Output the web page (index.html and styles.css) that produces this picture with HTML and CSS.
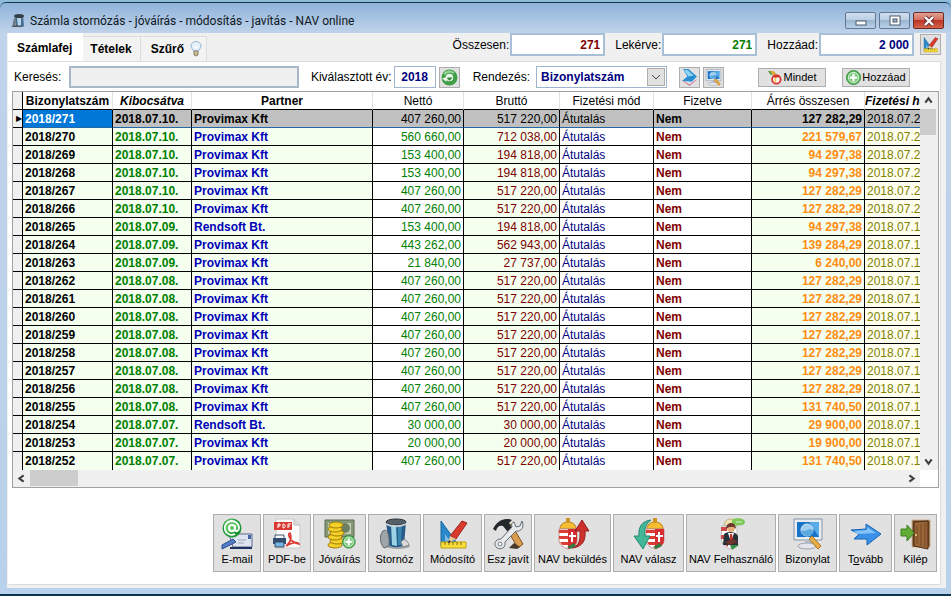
FILE: index.html
```
<!DOCTYPE html>
<html lang="hu">
<head>
	<meta charset="utf-8">
	<title>Számla stornózás - jóváírás - módosítás - javítás - NAV online</title>
	<link rel="stylesheet" href="styles.css">
</head>
<body>
<div class="window">
	<header class="titlebar">
		<svg class="app-icon" viewBox="0 0 16 16"><path d="M5 3h8l1 10-8 1z" fill="#466f92"/><path d="M7 5l1 8 3-1V5z" fill="#b5d5e8"/><ellipse cx="9" cy="3" rx="5" ry="2" fill="#384047"/><path d="M2 14L4 5l2 1-1 8z" fill="#6b7985"/><path d="M1 14l5-2 9 2z" fill="#4c565e"/></svg>
		<h1>Számla stornózás - jóváírás - módosítás - javítás - NAV online</h1>
		<div class="controls">
			<button class="ctl" aria-label="Kis méret"><svg viewBox="0 0 12 12"><rect x="1" y="6" width="10" height="4" fill="#fff" stroke="#4d5a69"/></svg></button>
			<button class="ctl" aria-label="Teljes méret"><svg viewBox="0 0 12 12"><rect x="1" y="1" width="10" height="9" fill="#fff" stroke="#4d5a69"/><rect x="4" y="4" width="4" height="3" fill="#9db6d2" stroke="#4d5a69"/></svg></button>
			<button class="ctl close" aria-label="Bezárás"><svg viewBox="0 0 12 12"><path d="M2 2l8 8M10 2l-8 8" stroke="#5a3030" stroke-width="4"/><path d="M2 2l8 8M10 2l-8 8" stroke="#fff" stroke-width="2.4"/></svg></button>
		</div>
	</header>

	<main class="client">
		<div class="topbar">
			<nav class="tabs">
				<button class="tab active">Számlafej</button>
				<button class="tab">Tételek</button>
				<button class="tab">Szűrő <svg class="bulb" viewBox="0 0 12 16"><path d="M3.500 10C3 8 1 7.500 1 5a5 4.500 0 0 1 10 0c0 2.500-2 3-2.500 5z" fill="#e4f1fb" stroke="#92b4cf"/><path d="M4 5l2 2 2-2" fill="none" stroke="#fff"/><path d="M4 10h4v4l-2 1-2-1z" fill="#c9b98c" stroke="#89826e"/></svg></button>
			</nav>
			<div class="totals">
				<label for="total">Összesen:</label><input id="total" class="num red" value="271" readonly>
				<label for="fetched">Lekérve:</label><input id="fetched" class="num green" value="271" readonly>
				<label for="add">Hozzáad:</label><input id="add" class="num navy" value="2 000">
				<button class="icon-btn" aria-label="Módosító"><svg viewBox="0 0 32 32"><use href="#i-edit"/></svg></button>
			</div>
		</div>

		<section class="page">
			<div class="filters">
				<label for="search">Keresés:</label><input id="search" class="search">
				<label for="year">Kiválasztott év:</label><input id="year" class="year" value="2018">
				<button class="icon-btn" aria-label="Frissítés"><svg viewBox="0 0 16 16"><circle cx="8" cy="8" r="5.500" fill="#e9f5e6" stroke="#3f9f48" stroke-width="4"/><path d="M3 5a6 6 0 0 1 9-1" fill="none" stroke="#9ad79a" stroke-width="2"/><path d="M5 8h6L8 11z" fill="#2f8138"/><path d="M1 9l5-2-1 5z" fill="#e9f5e6"/></svg></button>
				<label for="order" class="order-label">Rendezés:</label>
				<div class="combo">
					<select id="order"><option>Bizonylatszám</option></select>
					<svg viewBox="0 0 18 18"><rect x=".5" y=".5" width="17" height="17" fill="#e1e1e1" stroke="#adadad"/><path d="M5 7l4 4 4-4" fill="none" stroke="#444"/></svg>
				</div>
				<button class="icon-btn scan" aria-label="Lapozás"><svg viewBox="0 0 16 16"><path d="M1 11l6-3 8 2-7 6z" fill="#d78fa6"/><path d="M1 10l6-3 8 2-7 5z" fill="#d8eef8"/><path d="M2 0h5l8 7-5 5-9-1 5-4z" fill="#2a8dd0"/><path d="M3 1h3l6 5-5 1z" fill="#8fd4f5"/></svg></button>
				<button class="icon-btn" aria-label="Bizonylat"><svg viewBox="0 0 32 32"><use href="#i-screen"/></svg></button>
				<button class="text-btn all"><svg viewBox="0 0 16 16"><path d="M1 1h6l3 3-3 2z" fill="#d9a93e"/><path d="M2 1l3 4" stroke="#5b9a50" stroke-width="2"/><circle cx="10" cy="10" r="4.500" fill="#fff" stroke="#d8322c" stroke-width="2"/><path d="M8 13V8l2-1v6" fill="#f0c457"/><path d="M7 7h6" stroke="#cc3027" stroke-width="2"/></svg>Mindet</button>
				<button class="text-btn"><svg viewBox="0 0 16 16"><use href="#i-plus"/></svg>Hozzáad</button>
			</div>

			<div class="grid">
				<div class="grid-body">
					<div class="table-clip">
					<table>
						<colgroup><col class="c-mark"><col class="c-id"><col class="c-date"><col class="c-partner"><col class="c-net"><col class="c-gross"><col class="c-mode"><col class="c-paid"><col class="c-margin"><col class="c-due"></colgroup>
						<thead>
							<tr><th></th><th>Bizonylatszám</th><th class="it">Kibocsátva</th><th>Partner</th><th class="n">Nettó</th><th class="n">Bruttó</th><th class="n">Fizetési mód</th><th class="n">Fizetve</th><th class="n">Árrés összesen</th><th class="it">Fizetési hat.</th></tr>
						</thead>
						<tbody>
							<tr class="current"><td>&#9654;</td><td>2018/271</td><td>2018.07.10.</td><td>Provimax Kft</td><td>407 260,00</td><td>517 220,00</td><td>Átutalás</td><td>Nem</td><td>127 282,29</td><td>2018.07.20.</td></tr>
							<tr><td></td><td>2018/270</td><td>2018.07.10.</td><td>Provimax Kft</td><td>560 660,00</td><td>712 038,00</td><td>Átutalás</td><td>Nem</td><td>221 579,67</td><td>2018.07.20.</td></tr>
							<tr><td></td><td>2018/269</td><td>2018.07.10.</td><td>Provimax Kft</td><td>153 400,00</td><td>194 818,00</td><td>Átutalás</td><td>Nem</td><td>94 297,38</td><td>2018.07.20.</td></tr>
							<tr><td></td><td>2018/268</td><td>2018.07.10.</td><td>Provimax Kft</td><td>153 400,00</td><td>194 818,00</td><td>Átutalás</td><td>Nem</td><td>94 297,38</td><td>2018.07.20.</td></tr>
							<tr><td></td><td>2018/267</td><td>2018.07.10.</td><td>Provimax Kft</td><td>407 260,00</td><td>517 220,00</td><td>Átutalás</td><td>Nem</td><td>127 282,29</td><td>2018.07.20.</td></tr>
							<tr><td></td><td>2018/266</td><td>2018.07.10.</td><td>Provimax Kft</td><td>407 260,00</td><td>517 220,00</td><td>Átutalás</td><td>Nem</td><td>127 282,29</td><td>2018.07.20.</td></tr>
							<tr><td></td><td>2018/265</td><td>2018.07.09.</td><td>Rendsoft Bt.</td><td>153 400,00</td><td>194 818,00</td><td>Átutalás</td><td>Nem</td><td>94 297,38</td><td>2018.07.17.</td></tr>
							<tr><td></td><td>2018/264</td><td>2018.07.09.</td><td>Provimax Kft</td><td>443 262,00</td><td>562 943,00</td><td>Átutalás</td><td>Nem</td><td>139 284,29</td><td>2018.07.17.</td></tr>
							<tr><td></td><td>2018/263</td><td>2018.07.09.</td><td>Provimax Kft</td><td>21 840,00</td><td>27 737,00</td><td>Átutalás</td><td>Nem</td><td>6 240,00</td><td>2018.07.17.</td></tr>
							<tr><td></td><td>2018/262</td><td>2018.07.08.</td><td>Provimax Kft</td><td>407 260,00</td><td>517 220,00</td><td>Átutalás</td><td>Nem</td><td>127 282,29</td><td>2018.07.16.</td></tr>
							<tr><td></td><td>2018/261</td><td>2018.07.08.</td><td>Provimax Kft</td><td>407 260,00</td><td>517 220,00</td><td>Átutalás</td><td>Nem</td><td>127 282,29</td><td>2018.07.16.</td></tr>
							<tr><td></td><td>2018/260</td><td>2018.07.08.</td><td>Provimax Kft</td><td>407 260,00</td><td>517 220,00</td><td>Átutalás</td><td>Nem</td><td>127 282,29</td><td>2018.07.16.</td></tr>
							<tr><td></td><td>2018/259</td><td>2018.07.08.</td><td>Provimax Kft</td><td>407 260,00</td><td>517 220,00</td><td>Átutalás</td><td>Nem</td><td>127 282,29</td><td>2018.07.16.</td></tr>
							<tr><td></td><td>2018/258</td><td>2018.07.08.</td><td>Provimax Kft</td><td>407 260,00</td><td>517 220,00</td><td>Átutalás</td><td>Nem</td><td>127 282,29</td><td>2018.07.16.</td></tr>
							<tr><td></td><td>2018/257</td><td>2018.07.08.</td><td>Provimax Kft</td><td>407 260,00</td><td>517 220,00</td><td>Átutalás</td><td>Nem</td><td>127 282,29</td><td>2018.07.16.</td></tr>
							<tr><td></td><td>2018/256</td><td>2018.07.08.</td><td>Provimax Kft</td><td>407 260,00</td><td>517 220,00</td><td>Átutalás</td><td>Nem</td><td>127 282,29</td><td>2018.07.16.</td></tr>
							<tr><td></td><td>2018/255</td><td>2018.07.08.</td><td>Provimax Kft</td><td>407 260,00</td><td>517 220,00</td><td>Átutalás</td><td>Nem</td><td>131 740,50</td><td>2018.07.16.</td></tr>
							<tr><td></td><td>2018/254</td><td>2018.07.07.</td><td>Rendsoft Bt.</td><td>30 000,00</td><td>30 000,00</td><td>Átutalás</td><td>Nem</td><td>29 900,00</td><td>2018.07.15.</td></tr>
							<tr><td></td><td>2018/253</td><td>2018.07.07.</td><td>Provimax Kft</td><td>20 000,00</td><td>20 000,00</td><td>Átutalás</td><td>Nem</td><td>19 900,00</td><td>2018.07.15.</td></tr>
							<tr><td></td><td>2018/252</td><td>2018.07.07.</td><td>Provimax Kft</td><td>407 260,00</td><td>517 220,00</td><td>Átutalás</td><td>Nem</td><td>131 740,50</td><td>2018.07.15.</td></tr>
						</tbody>
					</table>
					</div>
					<div class="vscroll">
						<svg viewBox="0 0 16 16"><path d="M5 10l3-4 3 4" /></svg>
						<div class="thumb"></div>
						<svg viewBox="0 0 16 16"><path d="M5 6l3 4 3-4" /></svg>
					</div>
				</div>
				<div class="hscroll">
					<svg viewBox="0 0 16 16"><path d="M10 5L6 8l4 3" /></svg>
					<div class="thumb"></div>
					<svg viewBox="0 0 16 16"><path d="M6 5l4 3-4 3" /></svg>
				</div>
			</div>

			<div class="actions">
				<button class="small"><svg viewBox="0 0 32 32">
					<path d="M8 16h23v13H12z" fill="#dde4ef" stroke="#56688d"/><path d="M9 30h22" stroke="#1f315c" stroke-width="2"/><path d="M27 17h3v4h-3z" fill="#4563a0"/><path d="M17 22h8M17 25h6" stroke="#9aa5ba"/>
					<path d="M1 27l11-6 3 3-10 5-4 2z" fill="#547fc5" stroke="#294d91"/>
					<circle cx="11" cy="10" r="9.500" fill="#1e9637"/><circle cx="10" cy="8" r="7" fill="#59c562"/><circle cx="11" cy="10" r="3" fill="none" stroke="#fff" stroke-width="2"/><path d="M14 7v5c1 2 4 1 4-2 0-5-4-7-8-7-5 1-7 5-6 9 1 4 6 6 10 4" fill="none" stroke="#fff" stroke-width="1.800"/>
				</svg>E-mail</button>
				<button class="small"><svg viewBox="0 0 32 32">
					<path d="M5 1h18l6 6v23H5z" fill="#fbfbfb" stroke="#c8c8c8"/><path d="M23 1v6h6" fill="#ddd" stroke="#bbb"/>
					<path d="M3 4h18v8H3z" fill="#d83a31"/><path d="M7 10V6h2v2H7M12 6v4c3 0 3-4 0-4M17 10V6h3M17 8h2" fill="none" stroke="#fff"/>
					<path d="M15 28c5-4 6-9 4-13-3 0-1 9 9 11-1-3-8-1-13 2z" fill="none" stroke="#dc3830" stroke-width="1.600"/>
					<path d="M4 17h9v4H4z" fill="#f4f7fb" stroke="#456"/><path d="M2 20h13v6H2z" fill="#304c70"/><path d="M4 24h9v5H4z" fill="#70b4e8" stroke="#3a4959"/>
				</svg>PDF-be</button>
				<button class="medium"><svg viewBox="0 0 32 32">
					<path d="M1 2h29v17H1z" fill="#879879" stroke="#5a6a50"/><path d="M4 5h23v11H4z" fill="#c2ccb1"/><circle cx="21" cy="10" r="5" fill="#6d8065"/>
					<g fill="#f3d127" stroke="#a17b0c"><ellipse cx="11" cy="27" rx="7" ry="3"/><ellipse cx="13" cy="23" rx="7" ry="3"/><ellipse cx="11" cy="19" rx="7" ry="3"/><ellipse cx="13" cy="15" rx="7" ry="3"/><ellipse cx="11" cy="11" rx="7" ry="3"/><ellipse cx="12" cy="7" rx="7" ry="3"/></g>
					<use href="#i-plus" transform="translate(18 17) scale(.85)"/>
				</svg>Jóváírás</button>
				<button class="medium"><svg viewBox="0 0 32 32">
					<ellipse cx="19" cy="28" rx="12" ry="3" fill="#9da2a5"/><path d="M7 4h20l-2 23c-4 3-12 3-15 0z" fill="#265a88"/><path d="M12 6h5l1 22-5-1z" fill="#9bd2e6"/><path d="M19 6h4l-1 21h-3z" fill="#3986af"/>
					<ellipse cx="17" cy="4" rx="10" ry="3" fill="#566068" stroke="#2c343a"/><path d="M7 6c5 3 15 3 20 0" fill="none" stroke="#c9d0d4" stroke-width="2"/>
					<path d="M4 13c4-3 7 3 6 15l-5 2c-4-4-5-13-1-17z" fill="#a0a5aa" stroke="#5e666d"/><path d="M22 24c3-5 7-1 8 3l-6 2z" fill="#d8dadd" stroke="#888"/>
				</svg>Stornóz</button>
				<button class="large"><svg viewBox="0 0 32 32"><g id="i-edit">
					<path d="M4 3l18 25H4z" fill="#2a88cb" stroke="#1768a1"/><path d="M8 16l5 7H8z" fill="#7fbbe6"/>
					<path d="M4 24h25v6H4z" fill="#f9df39" stroke="#c5a011"/><path d="M8 24v3M12 24v3M16 24v3M20 24v3M24 24v3" stroke="#83660b"/>
					<path d="M13 18L25 3l5 2-11 16z" fill="#d93a2d" stroke="#9c241c"/><path d="M13 18l6 3-8 4z" fill="#eac79a"/><path d="M12 22l-1 3 3-1z" fill="#222"/>
				</g></svg>Módosító</button>
				<button class="small"><svg viewBox="0 0 32 32">
					<path d="M14 10l5-4 12 20-5 4z" fill="#d99d51" stroke="#80521e"/><path d="M1 11C5 3 12-1 20 2l-3 3 3 5-5 3-4-5c-4-1-6 1-7 5z" fill="#24282b"/>
					<path d="M22 4l2 5 4-1 2-5c3 6-1 11-6 10L13 24c1 6-4 8-8 6-4-3-2-9 4-9L20 9c-1-3 0-5 2-5z" fill="#e6eaed" stroke="#646c72"/><circle cx="8" cy="26" r="2" fill="#fff" stroke="#727a80"/>
					<path d="M17 30l5-5 6 4-3 2z" fill="#49382a"/>
				</svg>Esz javít</button>
				<button class="send"><svg viewBox="0 0 32 32"><g id="i-arms">
					<path d="M3 11c0-4 3-7 8-7s8 3 8 7z" fill="#f4bd32" stroke="#b97a12"/><path d="M10 4V1h2v3" fill="none" stroke="#d19422" stroke-width="2"/>
					<path d="M2 11h18v11c0 5-4 7-9 9-5-2-9-4-9-9z" fill="#fff" stroke="#bf9793"/><path d="M2 12h9v3H2zM2 18h9v3H2zM3 24h8v3H5z" fill="#df3b35"/><path d="M11 11h9v11c0 5-4 7-9 9z" fill="#d52e30"/><path d="M15 14v10M12 18h7" stroke="#fff" stroke-width="2"/>
				</g><path d="M15 30c9-3 8-10 8-17h-5l7-11 7 11h-4c1 10-3 16-13 17z" fill="#ce302b" stroke="#951c1d"/><path d="M10 29l7-4 2 3-6 3z" fill="#357b42"/></svg>NAV beküldés</button>
				<button class="reply"><svg viewBox="0 0 32 32"><use href="#i-arms" transform="translate(11 0)"/><path d="M18 2C9 3 5 9 6 18H1l9 13 7-13h-5c-1-8 1-12 6-16z" fill="#43b697" stroke="#278a70"/><path d="M20 29l7-4 2 3-6 3z" fill="#357b42"/></svg>NAV válasz</button>
				<button class="user"><svg viewBox="0 0 32 32">
					<path d="M10 4c2-4 9-4 11 0v4H9z" fill="#eee2b0" stroke="#bdad76"/><path d="M7 8h15v13c0 6-5 8-8 10-4-2-8-6-8-12z" fill="#fff" stroke="#bbb"/><path d="M6 9h6v4H6zM6 17h6v4H6zM7 25h6v4z" fill="#cd4b46"/><path d="M15 27h9l-7 5z" fill="#379147"/>
					<path d="M17 2c3-3 13-2 13 2s-8 4-10 3l-3 2z" fill="#7cc757"/><path d="M21 4h6" stroke="#d9f1ca"/>
					<path d="M9 16c3-3 12-3 14 2v9H8z" fill="#26313a"/><path d="M13 15h6l-3 9z" fill="#fff"/><path d="M15 16h2l1 6-2 3-1-3z" fill="#c52f2c"/><circle cx="16" cy="10" r="4" fill="#e8ad7c"/><path d="M11 11c0-8 10-8 10 0-2-3-7-3-10 0z" fill="#69382a"/><path d="M10 24l8-3 5 3-8 3z" fill="#73332d"/>
				</svg>NAV Felhasználó</button>
				<button class="large"><svg viewBox="0 0 32 32"><g id="i-screen">
					<path d="M2 1h28v21H2z" fill="#e9edf2" stroke="#8593a4"/><path d="M5 4h22v15H5z" fill="#1973c8"/><path d="M17 4h10v15z" fill="#56abe8"/><circle cx="15" cy="12" r="6" fill="#9fcdee" stroke="#d3eafa"/><path d="M9 12c4 3 8-3 12 0 0 8-11 8-12 0z" fill="#5ba7df"/>
					<path d="M13 22h7v4h-7z" fill="#b7bec7"/><ellipse cx="15" cy="28" rx="9" ry="3" fill="#e2e6ec" stroke="#9ba4af"/><path d="M20 18l9 10-3 3-9-10z" fill="#e8ad49" stroke="#ad7421"/>
				</g></svg>Bizonylat</button>
				<button class="medium"><svg viewBox="0 0 32 32"><path d="M1 12l15-1V6l15 10-14 11v-6L4 21l5-5z" fill="#3b91e6" stroke="#1864b8"/><path d="M4 13l13-1V9l9 6-19 1z" fill="#85c3fa"/></svg><span>T<u>o</u>vább</span></button>
				<button class="exit"><svg viewBox="0 0 32 32"><path d="M12 2h18v27H12z" fill="#6d492b" stroke="#d1b48d"/><path d="M14 4l14-1v28l-14-3z" fill="#986538" stroke="#4d2d14"/><path d="M17 7v19M21 6v22M25 5v24" stroke="#784a24"/><circle cx="16" cy="17" r="1" fill="#f2d98e"/><path d="M1 11h6V7l7 8-7 8v-5H1z" fill="#62ae35" stroke="#3c7e20"/></svg>Kilép</button>
			</div>
		</section>
	</main>
</div>

<svg class="defs" viewBox="0 0 16 16">
	<defs><g id="i-plus"><circle cx="8" cy="8" r="7.500" fill="#58b65b" stroke="#3b8e43"/><circle cx="8" cy="8" r="5.500" fill="#79c979" stroke="#e5f6e3"/><path d="M8 4v8M4 8h8" stroke="#fff" stroke-width="2.400"/></g></defs>
</svg>
</body>
</html>
```

FILE: styles.css
```
* {
	box-sizing: border-box;
}
body {
	margin: 0;
	background: #8dbcdb;
	font-family: "Liberation Sans", Arial, sans-serif;
	font-size: 12px;
	line-height: 14px;
	color: #000;
}
button, input, select {
	font: inherit;
	color: inherit;
	margin: 0;
	padding: 0;
}
svg {
	display: block;
	flex: none;
}
.defs {
	position: absolute;
	width: 0;
	height: 0;
}

/* window frame */
.window {
	display: flex;
	flex-direction: column;
	min-height: calc(100vh - 2px);
	margin-top: 2px;
	border-top: 1px solid #17384f;
	border-bottom: 2px solid #0c3548;
	border-radius: 6px 6px 0 0;
	padding: 0 5px 6px 7px;
	background: linear-gradient(#8fb3da, #bfd3ea 30px, #b9d1ea);
}
.titlebar {
	display: flex;
	align-items: center;
	gap: 4px;
	height: 30px;
	padding: 5px 2px 0 3px;
}
.app-icon {
	width: 16px;
	height: 16px;
}
h1 {
	margin: 0;
	font: 12px Roboto, "Noto Sans", sans-serif;
	color: #101820;
}
.controls {
	display: flex;
	gap: 3px;
	margin-left: auto;
}
.ctl {
	display: flex;
	align-items: center;
	justify-content: center;
	width: 31px;
	height: 17px;
	border: 1px solid #63788f;
	border-radius: 2px;
	background: linear-gradient(#d0dfef, #b9cde3 50%, #9bb5d2 50%, #b9d1ea);
}
.ctl svg {
	width: 12px;
	height: 12px;
}
.close {
	border-color: #702b23;
	background: linear-gradient(#e2a294, #d0695a 50%, #bb3626 50%, #d5644c);
}

.client {
	display: flex;
	flex-direction: column;
	flex: 1;
	padding: 0 5px 3px 1px;
	background: #f0f0f0;
}

/* tabs and totals */
.topbar {
	display: flex;
	justify-content: space-between;
	height: 28px;
}
.tabs {
	display: flex;
	align-items: flex-end;
}
.tab {
	display: flex;
	align-items: center;
	gap: 6px;
	height: 25px;
	padding: 0 8px 0 7px;
	border: 1px solid #dcdcdc;
	border-left: 0;
	border-bottom: 0;
	background: #f3f3f3;
	font-weight: bold;
}
.tab.active {
	height: 28px;
	padding: 0 10px 0 9px;
	background: #fff;
	border-color: #fff;
}
.tab:last-child {
	padding: 0 4px 0 10px;
}
.bulb {
	width: 12px;
	height: 16px;
}
.totals {
	display: flex;
	align-items: flex-start;
}
.totals label {
	padding-top: 5px;
	margin: 0 1px 0 10px;
}
.num {
	width: 95px;
	height: 23px;
	padding: 0 3px;
	border: 2px solid #a9bfd5;
	background: #fff;
	font-weight: bold;
	text-align: right;
}
.red { color: #800000; }
.green { color: #008000; }
.navy { color: #000080; }

.icon-btn {
	display: flex;
	align-items: center;
	justify-content: center;
	width: 21px;
	height: 21px;
	border: 1px solid #adadad;
	background: #e1e1e1;
}
.icon-btn svg {
	width: 17px;
	height: 17px;
}
.totals .icon-btn {
	margin: 1px 0 0 6px;
}

.page {
	display: flex;
	flex-direction: column;
	flex: 1;
	padding: 4px 1px 12px 3px;
	border: 1px solid #dcdcdc;
	border-left-color: #fff;
	background: #fff;
}

/* filter row */
.filters {
	display: flex;
	align-items: center;
	height: 25px;
	padding: 0 29px 3px 2px;
}
.search {
	flex: 1;
	height: 22px;
	margin: 0 12px 0 8px;
	border: 2px solid #a9b8c8;
	background: #f0f0f0;
}
.year {
	width: 42px;
	height: 22px;
	margin: 0 3px 0 2px;
	border: 1px solid #9fb4cd;
	background: #fff;
	color: #000080;
	font-weight: bold;
	text-align: center;
}
.order-label {
	margin: 0 6px 0 13px;
}
.combo {
	position: relative;
	width: 131px;
	height: 22px;
}
.combo select {
	appearance: none;
	width: 100%;
	height: 100%;
	padding: 0 22px 0 4px;
	border: 1px solid #9fb4cd;
	border-radius: 0;
	background: #fff;
	color: #000080;
	font-weight: bold;
}
.combo svg {
	position: absolute;
	top: 2px;
	right: 2px;
	width: 18px;
	height: 18px;
	pointer-events: none;
}
.scan {
	margin: 0 3px 0 12px;
}
.text-btn {
	display: flex;
	align-items: center;
	justify-content: center;
	gap: 1px;
	width: 68px;
	height: 19px;
	border: 1px solid #adadad;
	background: #e1e1e1;
	font-size: 11px;
}
.text-btn svg {
	width: 15px;
	height: 15px;
}
.all {
	margin: 0 16px 0 34px;
}

/* data grid */
.grid {
	border: 1px solid #a0a0a0;
}
.grid-body {
	display: flex;
}
.table-clip {
	flex: 1;
	min-width: 0;
	overflow: hidden;
}
table {
	table-layout: fixed;
	width: 936px;
	border-collapse: separate;
	border-spacing: 0;
}
.c-mark { width: 10px; }
.c-id { width: 90px; }
.c-date { width: 79px; }
.c-partner { width: 181px; }
.c-net { width: 91px; }
.c-gross { width: 96px; }
.c-mode { width: 94px; }
.c-paid { width: 98px; }
.c-margin { width: 113px; }
.c-due { width: 84px; }
th, td {
	height: 18px;
	padding: 0 2px;
	border-right: 1px solid #000;
	border-bottom: 1px solid #000;
	overflow: hidden;
	white-space: nowrap;
	line-height: 14px;
	text-align: left;
}
th {
	border-right-color: #e2e2e2;
	text-align: center;
}
th:first-child {
	border-right-color: #000;
	background: #f0f0f0;
}
.it { font-style: italic; }
.n { font-weight: normal; }
th:last-child { text-align: left; padding: 0; }
tbody tr:last-child td {
	border-bottom: 0;
}
td:nth-child(1) { background: #f0f0f0; padding: 0; font-size: 8px; text-align: right; }
td:nth-child(2) { background: #f4fff0; font-weight: bold; }
td:nth-child(3) { background: #f4fff0; color: #008000; font-weight: bold; }
td:nth-child(4) { background: #f4fff0; color: #0000b8; font-weight: bold; }
td:nth-child(5) { color: #008000; text-align: right; }
td:nth-child(6) { background: #f4fff0; color: #800000; text-align: right; }
td:nth-child(7) { color: #000080; }
td:nth-child(8) { color: #800000; font-weight: bold; }
td:nth-child(9) { background: #f4fff0; color: #ff8c10; font-weight: bold; text-align: right; }
td:nth-child(10) { background: #fffff0; color: #808000; }
tr.current td:nth-child(n+2) {
	border-bottom-color: #2468a8;
	background: #c0c0c0;
	color: #000;
}
tr.current td:nth-child(2) {
	background: #0078d7;
	color: #fff;
}

.vscroll, .hscroll {
	display: flex;
	background: #f0f0f0;
}
.vscroll {
	flex-direction: column;
	width: 18px;
}
.hscroll {
	height: 17px;
	margin-right: 18px;
}
.vscroll svg, .hscroll svg {
	width: 17px;
	height: 17px;
	fill: none;
	stroke: #404040;
	stroke-width: 2;
}
.vscroll svg:last-child { margin-top: auto; }
.hscroll svg:last-child { margin-left: auto; }
.thumb { background: #cdcdcd; }
.vscroll .thumb { height: 26px; margin-right: 2px; }
.hscroll .thumb { width: 48px; margin-bottom: 1px; }

/* bottom buttons */
.actions {
	display: flex;
	justify-content: flex-end;
	gap: 2px;
	margin-top: auto;
	padding: 20px 2px 0 0;
}
.actions button {
	display: flex;
	flex-direction: column;
	align-items: center;
	justify-content: space-between;
	height: 58px;
	padding: 3px 0 5px;
	border: 1px solid #adadad;
	background: #e1e1e1;
	font-size: 11px;
	line-height: 13px;
	white-space: nowrap;
}
.actions svg {
	width: 32px;
	height: 32px;
}
.small { width: 48px; }
.medium { width: 53px; }
.large { width: 59px; }
.send { width: 77px; }
.reply { width: 71px; }
.user { width: 90px; }
.exit { width: 43px; }
```
